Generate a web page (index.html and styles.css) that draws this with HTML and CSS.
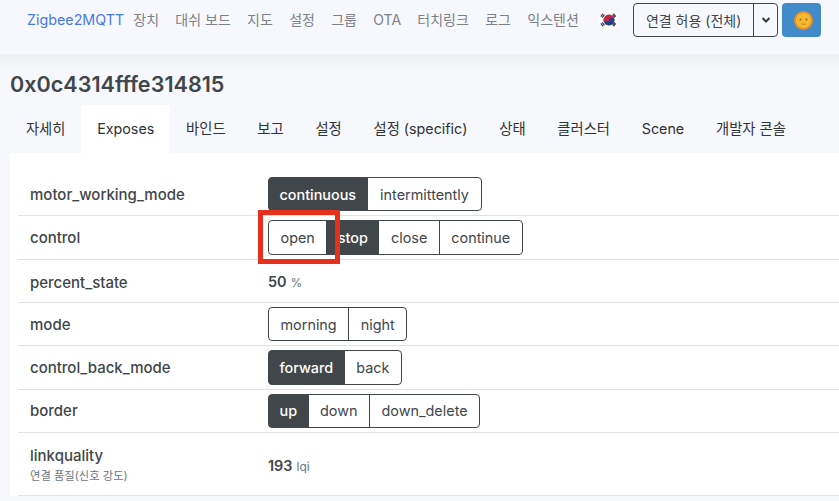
FILE: index.html
```html
<!DOCTYPE html>
<html lang="ko">
<head>
<meta charset="utf-8">
<title>Zigbee2MQTT</title>
<link rel="stylesheet" href="styles.css">
</head>
<body>
<nav class="navbar">
  <a class="brand">Zigbee2MQTT</a>
  <a class="nav-link">장치</a>
  <a class="nav-link">대쉬 보드</a>
  <a class="nav-link">지도</a>
  <a class="nav-link">설정</a>
  <a class="nav-link">그룹</a>
  <a class="nav-link">OTA</a>
  <a class="nav-link">터치링크</a>
  <a class="nav-link">로그</a>
  <a class="nav-link">익스텐션</a>
  <svg class="flag" viewBox="0 0 20 20" aria-hidden="true">
    <circle cx="10" cy="10" r="10" fill="#fff"/>
    <g transform="rotate(15 10 10)">
      <path d="M4.500 10a5.500 5.500 0 0 1 11 0z" fill="#c8233c"/>
      <path d="M4.500 10a5.500 5.500 0 0 0 11 0z" fill="#1c3f8f"/>
      <path d="M4.500 10a2.750 2.750 0 0 0 5.500 0z" fill="#c8233c"/>
      <path d="M10 10a2.750 2.750 0 0 1 5.500 0z" fill="#1c3f8f"/>
    </g>
    <path d="M1.800 6.700l2.300-3M3.200 7.700l2.300-3M14.500 3.700l2.300 3M13.500 4.700l2.300 3M1.800 13.300l2.300 3M3.200 12.300l2.300 3M14.500 16.300l2.300-3M13.500 15.300l2.300-3" stroke="#3c3c3c" stroke-width="1.200"/>
  </svg>
  <div class="permit">
    <button class="permit-main">연결 허용 (전체)</button>
    <button class="permit-caret">
      <svg viewBox="0 0 10 8" width="10" height="8" aria-hidden="true"><path d="M1.500 2l3.500 3.500L8.500 2" fill="none" stroke="#343a40" stroke-width="2"/></svg>
    </button>
  </div>
  <button class="theme">
    <svg class="sun" viewBox="0 0 20 20" width="19" height="19" aria-hidden="true">
      <circle cx="10" cy="10" r="10" fill="#e58f2a"/>
      <circle cx="10" cy="10" r="8" fill="#f5b92f"/>
      <circle cx="6.800" cy="9" r="1.200" fill="#a96c28"/>
      <circle cx="13.200" cy="9" r="1.200" fill="#a96c28"/>
      <path d="M7.500 13.500q2.500 1.200 5 0" fill="none" stroke="#c9812a" stroke-width="1"/>
    </svg>
  </button>
</nav>
<main class="page">
  <h1 class="title">0x0c4314fffe314815</h1>
  <ul class="tabs">
    <li class="tab">자세히</li>
    <li class="tab active">Exposes</li>
    <li class="tab">바인드</li>
    <li class="tab">보고</li>
    <li class="tab">설정</li>
    <li class="tab">설정 (specific)</li>
    <li class="tab">상태</li>
    <li class="tab">클러스터</li>
    <li class="tab">Scene</li>
    <li class="tab">개발자 콘솔</li>
  </ul>
  <section class="card">
    <div class="row">
      <div class="label">motor_working_mode</div>
      <div class="group"><button class="btn on">continuous</button><button class="btn wide">intermittently</button></div>
    </div>
    <div class="row">
      <div class="label">control</div>
      <div class="group"><button class="btn">open</button><button class="btn on">stop</button><button class="btn">close</button><button class="btn">continue</button></div>
      <div class="highlight"></div>
    </div>
    <div class="row">
      <div class="label text-row">percent_state</div>
      <div class="value"><strong>50</strong> <small>%</small></div>
    </div>
    <div class="row">
      <div class="label">mode</div>
      <div class="group"><button class="btn">morning</button><button class="btn">night</button></div>
    </div>
    <div class="row">
      <div class="label">control_back_mode</div>
      <div class="group"><button class="btn on">forward</button><button class="btn">back</button></div>
    </div>
    <div class="row">
      <div class="label">border</div>
      <div class="group"><button class="btn on">up</button><button class="btn">down</button><button class="btn">down_delete</button></div>
    </div>
    <div class="row tall">
      <div class="label">linkquality<span class="hint">연결 품질(신호 강도)</span></div>
      <div class="value"><strong>193</strong> <small>lqi</small></div>
    </div>
  </section>
</main>
</body>
</html>
```
FILE: styles.css
```css
* { box-sizing: border-box; }
html, body { margin: 0; height: 100%; overflow: hidden; }
body {
  background: #f6f8fc;
  color: #41464b;
  font: 14.400px/21px Inter, "Noto Sans CJK KR", sans-serif;
}
.navbar {
  display: flex;
  align-items: flex-start;
  height: 54px;
  padding: 3px 0 0 27px;
  background: #f7f8fd;
}
.brand { color: #4a78e6; font-size: 14.300px; line-height: 34px; margin-right: 9px; }
.nav-link { color: #7d8186; font-size: 14px; line-height: 34px; margin-right: 16.300px; }
.flag { width: 20px; height: 20px; margin: 7px 14px 0 4px; }
.permit { display: flex; height: 34px; margin-right: 4px; }
.permit-main, .permit-caret {
  font: inherit;
  font-size: 14px;
  color: #41464b;
  background: #f7f8fd;
  border: 1px solid #41464b;
}
.permit-main { width: 121px; padding: 0; border-radius: 4px 0 0 4px; }
.permit-caret {
  width: 25px; padding: 0; margin-left: -1px;
  border-radius: 0 4px 4px 0;
  display: flex; align-items: center; justify-content: center;
}
.theme {
  width: 39px; height: 34px; padding: 0; border: 0;
  border-radius: 4px; background: #428bca;
  display: flex; align-items: center; justify-content: center;
}
.sun { margin-left: 3px; }
.page {
  background: linear-gradient(#eeeff3, #f6f8fc 16px);
  padding: 0 0 0 10px;
  height: 447px;
}
.title {
  margin: 0;
  padding-top: 15px;
  height: 51px;
  font-size: 21.600px;
  line-height: 30px;
  font-weight: 600;
  color: #41464b;
}
.tabs { display: flex; list-style: none; margin: 0; padding: 0; height: 48px; }
.tab {
  padding: 13px 15.900px 0;
  color: #2e3338;
  font-size: 14.300px;
  line-height: 21px;
  border-radius: 3px 3px 0 0;
}
.tab.active { background: #fff; }
.card { background: #fff; padding: 24px 0 0 8px; }
.row {
  position: relative;
  display: flex;
  align-items: center;
  height: 43.400px;
  padding: 4px 0 4px;
  border-bottom: 1px solid #dee2e9;
}
.row:first-child { height: 39.200px; padding-top: 0; }
.row.tall { height: 63px; }
.label { width: 250px; padding-left: 12px; font-size: 15px; font-weight: 500; color: #41464b; }
.label.text-row { padding-top: 3px; }
.row.tall .label { padding-top: 4px; }
.hint { display: block; font-size: 11.300px; line-height: 21px; font-weight: 400; color: #6c757d; }
.group { display: flex; height: 34.400px; }
.btn {
  font: inherit;
  color: #41464b;
  background: #fff;
  border: 1px solid #41464b;
  padding: 0 11.500px;
  margin-left: -1px;
  white-space: nowrap;
}
.btn:first-child { margin-left: 0; border-radius: 4px 0 0 4px; }
.btn:last-child { border-radius: 0 4px 4px 0; }
.btn.on { background: #41464b; color: #fff; font-weight: 500; padding: 0 10.500px; }
.btn.wide { padding: 0 12.500px; }
.value { padding-top: 3px; }
.value strong { font-weight: 600; }
.value small { font-size: 12px; color: #6c757d; }
.highlight {
  position: absolute;
  left: 240px; top: -6px;
  width: 82px; height: 54px;
  border: 5px solid #e5311c;
  pointer-events: none;
}
```
